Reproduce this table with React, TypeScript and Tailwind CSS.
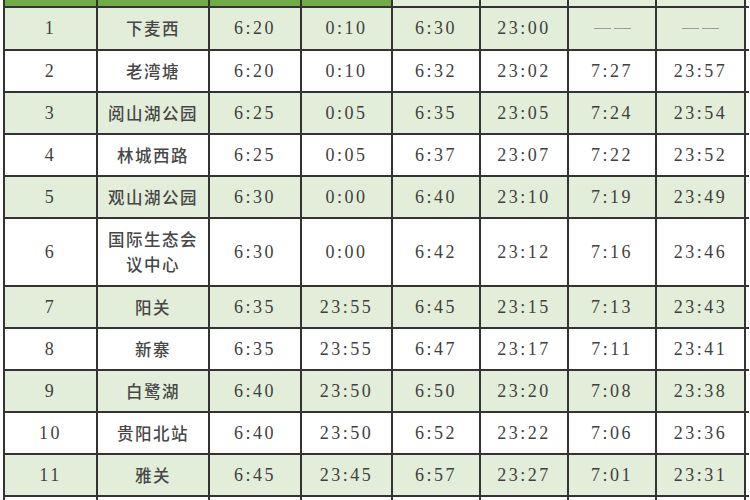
import React from "react";

const widths = ["w-[93px]", "w-[112px]", "w-[92px]", "w-[91px]", "w-[88px]", "w-[88px]", "w-[88px]", "w-[89px]"];

type Row = { n: string; name: string[]; a: string; b: string; c: string; d: string; e: string; f: string; tall?: boolean };

const rows: Row[] = [
  { n: "1", name: ["下麦西"], a: "6:20", b: "0:10", c: "6:30", d: "23:00", e: "——", f: "——" },
  { n: "2", name: ["老湾塘"], a: "6:20", b: "0:10", c: "6:32", d: "23:02", e: "7:27", f: "23:57" },
  { n: "3", name: ["阅山湖公园"], a: "6:25", b: "0:05", c: "6:35", d: "23:05", e: "7:24", f: "23:54" },
  { n: "4", name: ["林城西路"], a: "6:25", b: "0:05", c: "6:37", d: "23:07", e: "7:22", f: "23:52" },
  { n: "5", name: ["观山湖公园"], a: "6:30", b: "0:00", c: "6:40", d: "23:10", e: "7:19", f: "23:49" },
  { n: "6", name: ["国际生态会", "议中心"], a: "6:30", b: "0:00", c: "6:42", d: "23:12", e: "7:16", f: "23:46", tall: true },
  { n: "7", name: ["阳关"], a: "6:35", b: "23:55", c: "6:45", d: "23:15", e: "7:13", f: "23:43" },
  { n: "8", name: ["新寨"], a: "6:35", b: "23:55", c: "6:47", d: "23:17", e: "7:11", f: "23:41" },
  { n: "9", name: ["白鹭湖"], a: "6:40", b: "23:50", c: "6:50", d: "23:20", e: "7:08", f: "23:38" },
  { n: "10", name: ["贵阳北站"], a: "6:40", b: "23:50", c: "6:52", d: "23:22", e: "7:06", f: "23:36" },
  { n: "11", name: ["雅关"], a: "6:45", b: "23:45", c: "6:57", d: "23:27", e: "7:01", f: "23:31" },
];

const numCls =
  "font-['Liberation_Serif','Noto_Sans_CJK_SC',serif] text-[18px] tracking-[2.5px] text-[#3f3f3f]";
const cjkCls =
  "font-['Noto_Sans_CJK_SC',sans-serif] text-[16.5px] tracking-[1.5px] leading-[25px] text-[#474747] font-medium";

function Cell({ w, children, bg }: { w: string; children?: React.ReactNode; bg: string }) {
  return (
    <div className={`${w} ${bg} shrink-0 border-r-2 border-[#333] flex flex-col items-center justify-center text-center`}>
      {children}
    </div>
  );
}

export default function App() {
  return (
    <div className="w-[750px] h-[500px] overflow-hidden bg-white">
      <div className="ml-[3px] w-[746px] border-l-2 border-[#333]">
        {/* header (cropped) */}
        <div className="flex h-[8px] border-b-2 border-[#333]">
          {widths.map((w, i) => (
            <Cell key={i} w={w} bg={i < 4 ? "bg-[#70ad47]" : "bg-[#e2eed9]"} />
          ))}
        </div>
        {rows.map((r, idx) => {
          const bg = idx % 2 === 0 ? "bg-[#e2eed9]" : "bg-white";
          const h = r.tall ? "h-[68px]" : idx === 0 ? "h-[43px]" : "h-[42px]";
          const vals = [r.a, r.b, r.c, r.d, r.e, r.f];
          return (
            <div key={idx} className={`flex ${h} border-b-2 border-[#333]`}>
              <Cell w={widths[0]} bg={bg}>
                <span className={numCls}>{r.n}</span>
              </Cell>
              <Cell w={widths[1]} bg={bg}>
                {r.name.map((t, k) => (
                  <span key={k} className={cjkCls}>
                    {t}
                  </span>
                ))}
              </Cell>
              {vals.map((v, k) => (
                <Cell key={k} w={widths[k + 2]} bg={bg}>
                  {v === "——" ? (
                    <span className="flex gap-[3px]">
                      <span className="w-[17px] h-[1.5px] bg-[#9a9a9a]" />
                      <span className="w-[17px] h-[1.5px] bg-[#9a9a9a]" />
                    </span>
                  ) : (
                    <span className={numCls}>{v}</span>
                  )}
                </Cell>
              ))}
            </div>
          );
        })}
        <div className="flex h-[40px]">
          {widths.map((w, i) => (
            <Cell key={i} w={w} bg="bg-white" />
          ))}
        </div>
      </div>
    </div>
  );
}
